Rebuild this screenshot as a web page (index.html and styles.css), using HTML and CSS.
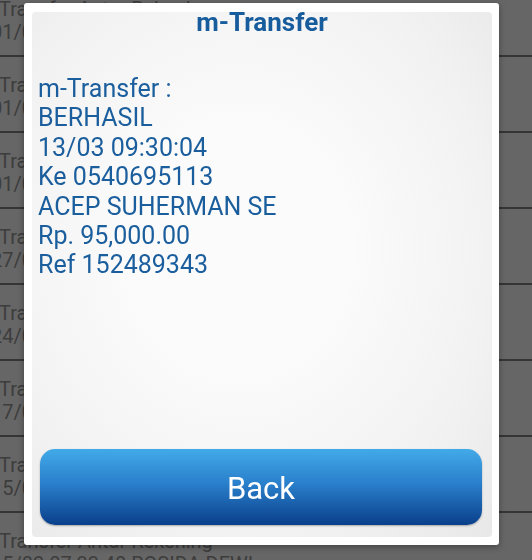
FILE: index.html
```html
<!DOCTYPE html>
<html lang="id">
<head>
	<meta charset="UTF-8">
	<title>m-Transfer</title>
	<link rel="stylesheet" href="styles.css">
</head>
<body>
	<ul class="history">
		<li><p>Transfer Antar Rekening</p><p class="sub">01/03 08:12:51 DEDI KURNIAWAN</p></li>
		<li><p>Transfer Antar Rekening</p><p class="sub">01/03 08:10:22 SITI AMINAH</p></li>
		<li><p>Transfer Antar Rekening</p><p class="sub">01/03 07:55:03 ASEP SAEPUDIN</p></li>
		<li><p>Transfer Antar Rekening</p><p class="sub">27/02 19:41:17 YANTI RAHAYU</p></li>
		<li><p>Transfer Antar Rekening</p><p class="sub">24/02 12:05:38 RINA MARLINA</p></li>
		<li><p>Transfer Antar Rekening</p><p class="sub">17/02 09:21:44 ENDANG SUPRIATNA</p></li>
		<li><p>Transfer Antar Rekening</p><p class="sub">15/02 16:48:09 UJANG SOBARI</p></li>
		<li><p>Transfer Antar Rekening</p><p class="sub">15/02 07:33:40 ROSIDA DEWI</p></li>
	</ul>

	<div class="dialog">
		<div class="panel">
			<h1 class="title">m-Transfer</h1>
			<div class="message">
				<p>m-Transfer :</p>
				<p>BERHASIL</p>
				<p>13/03 09:30:04</p>
				<p>Ke 0540695113</p>
				<p>ACEP SUHERMAN SE</p>
				<p>Rp. 95,000.00</p>
				<p>Ref 152489343</p>
			</div>
			<button class="back">Back</button>
		</div>
	</div>
</body>
</html>
```

FILE: styles.css
```css
*{
	margin:0px;
	padding:0px;
	box-sizing:border-box;
}
html,body{
	width:532px;
	height:560px;
	overflow:hidden;
	background:#666666;
	font-family:Roboto,"Liberation Sans",sans-serif;
}
ul li{
	list-style:none;
}
.history{
	margin-top:-19px;
	margin-left:-1px;
}
.history li{
	height:76px;
	padding-top:17px;
	border-bottom:2px solid #353535;
	color:#3d3d3d;
	font-size:20px;
	line-height:23px;
	white-space:nowrap;
	overflow:hidden;
}
.history .sub{
	margin-left:-8px;
}
.dialog{
	position:fixed;
	left:24px;
	top:3px;
	width:475px;
	height:542px;
	padding:9px 7px 8px 8px;
	background:#ffffff;
	border-radius:3px;
	box-shadow:0 2px 6px rgba(0,0,0,0.35);
}
.panel{
	height:100%;
	display:flex;
	flex-direction:column;
	border-radius:4px;
	background:radial-gradient(ellipse at 45% 45%, #fbfbfb 30%, #f2f2f2 70%, #e8e8e8 100%);
}
.title{
	font-size:26px;
	font-weight:bold;
	line-height:20px;
	text-align:center;
	color:#175c9c;
}
.message{
	flex:1;
	padding:42px 0 0 6px;
	font-size:25px;
	line-height:29.4px;
	color:#1b5e9d;
}
.back{
	height:76px;
	margin:0 10px 12px 8px;
	padding-top:3px;
	border:none;
	border-radius:15px;
	background:linear-gradient(#42aae8, #2a80cc 45%, #0a3f8b);
	box-shadow:0 1px 2px rgba(0,0,0,0.3);
	color:#ffffff;
	font-family:Roboto,"Liberation Sans",sans-serif;
	font-size:31px;
}
```
